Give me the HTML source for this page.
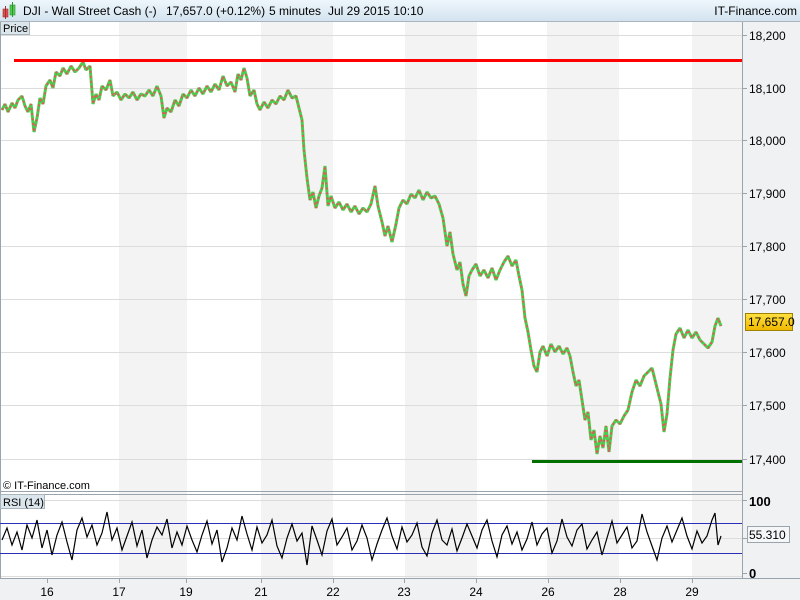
<!DOCTYPE html>
<html><head><meta charset="utf-8"><style>
body{margin:0;width:800px;height:600px;overflow:hidden;background:#fff;font-family:"Liberation Sans",sans-serif;}
svg{display:block}
</style></head><body>
<svg width="800" height="600" xmlns="http://www.w3.org/2000/svg" font-family="Liberation Sans, sans-serif">
<defs><linearGradient id="hg" x1="0" y1="0" x2="0" y2="1"><stop offset="0" stop-color="#eef6fc"/><stop offset="1" stop-color="#d3e3ef"/></linearGradient>
<linearGradient id="yg" x1="0" y1="0" x2="0" y2="1"><stop offset="0" stop-color="#ffe040"/><stop offset="1" stop-color="#f0b800"/></linearGradient></defs>
<rect x="0" y="0" width="800" height="600" fill="#f0f1f3"/>
<rect x="0" y="22" width="742" height="556" fill="#fff"/>
<g fill="#f3f3f3">
<rect x="119" y="22" width="68" height="556"/><rect x="261" y="22" width="72" height="556"/>
<rect x="405" y="22" width="72" height="556"/><rect x="547" y="22" width="72" height="556"/>
<rect x="692" y="22" width="50" height="556"/></g>
<g stroke="#dcdcdc" stroke-width="1">
<line x1="0" y1="35.5" x2="742" y2="35.5"/><line x1="0" y1="88.5" x2="742" y2="88.5"/><line x1="0" y1="140.5" x2="742" y2="140.5"/><line x1="0" y1="193.5" x2="742" y2="193.5"/><line x1="0" y1="246.5" x2="742" y2="246.5"/><line x1="0" y1="299.5" x2="742" y2="299.5"/><line x1="0" y1="352.5" x2="742" y2="352.5"/><line x1="0" y1="405.5" x2="742" y2="405.5"/><line x1="0" y1="459.5" x2="742" y2="459.5"/>
<line x1="0" y1="500.5" x2="742" y2="500.5"/><line x1="0" y1="538.5" x2="742" y2="538.5"/><line x1="0" y1="576.5" x2="742" y2="576.5"/>
</g>
<rect x="0" y="0" width="800" height="21" fill="url(#hg)"/>
<line x1="0" y1="21.5" x2="800" y2="21.5" stroke="#a9b4bd"/>
<rect x="3" y="9" width="5" height="8" fill="#e05050" stroke="#a03030" stroke-width=".6"/><line x1="5.5" y1="6" x2="5.5" y2="19" stroke="#a03030"/>
<rect x="10" y="5" width="5" height="10" fill="#50d050" stroke="#309030" stroke-width=".6"/><line x1="12.5" y1="2" x2="12.5" y2="17" stroke="#309030"/>
<g font-size="12" fill="#000">
<text x="23" y="15">DJI - Wall Street Cash (-)</text>
<text x="166" y="15">17,657.0 (+0.12%)</text>
<text x="269" y="15">5 minutes</text>
<text x="328" y="15">Jul 29 2015 10:10</text>
<text x="797" y="15" text-anchor="end">IT-Finance.com</text></g>
<rect x="0.5" y="21.5" width="29" height="13" fill="#dbe5ec" stroke="#a9b4bd"/>
<text x="3" y="32" font-size="11">Price</text>
<line x1="0.5" y1="22" x2="0.5" y2="578" stroke="#9aa4ad"/>
<line x1="742.5" y1="22" x2="742.5" y2="578" stroke="#9aa4ad"/>
<line x1="0" y1="491.5" x2="742" y2="491.5" stroke="#9aa4ad"/>
<line x1="0" y1="494.5" x2="742" y2="494.5" stroke="#9aa4ad"/>
<line x1="0" y1="578.5" x2="800" y2="578.5" stroke="#9aa4ad"/>
<g fill="none" stroke-width="3" stroke-linejoin="bevel">
<polyline stroke="#4ccc4c" points="2,110 5,104 8,112 12,103 15,108 18,100 22,96 25,106 28,112 31,104 34,132 37,118 40,98 43,104 46,86 50,80 53,88 56,72 60,76 63,68 67,74 71,66 75,72 79,68 83,62 86,70 90,66 93,104 96,94 99,100 102,86 106,90 110,80 113,96 117,92 121,100 125,94 129,98 133,92 137,100 141,94 145,96 149,90 153,96 157,86 161,96 164,118 167,108 171,112 175,100 179,106 183,94 187,98 191,90 195,96 199,88 203,94 207,86 211,92 215,84 219,90 223,76 227,86 231,82 235,92 238,74 241,80 244,68 247,78 250,96 254,90 257,104 260,110 264,102 268,108 272,100 276,104 280,96 284,100 288,90 292,98 296,96 299,108 302,120 304,150 307,178 310,200 313,192 316,208 319,196 322,188 325,166 328,206 331,196 335,208 339,202 343,210 347,204 351,212 355,206 359,214 363,208 367,212 371,204 375,186 378,206 382,222 385,236 388,226 392,242 396,224 399,208 403,200 407,204 411,194 415,198 419,190 423,200 427,192 431,198 435,196 439,204 443,218 447,246 450,232 453,254 457,270 460,262 463,284 466,296 469,276 472,270 476,264 480,276 484,270 488,278 492,268 496,280 500,270 504,262 508,256 512,266 516,260 519,276 522,290 525,318 528,332 531,350 534,366 537,372 540,352 543,346 547,356 551,344 555,352 559,346 563,354 567,348 570,356 573,372 576,386 579,380 582,400 585,420 588,412 591,440 594,430 597,454 600,436 603,448 606,426 609,452 612,426 616,420 620,424 624,416 628,410 632,392 636,380 640,386 644,376 648,372 652,368 655,380 658,392 661,404 664,432 667,414 670,378 673,350 676,334 680,328 684,338 688,330 692,338 696,332 700,340 704,344 708,348 712,342 715,326 718,318 721,326"/>
<polyline stroke="#dd5a5a" stroke-width="2" stroke-dasharray="2 3" points="2,110 5,104 8,112 12,103 15,108 18,100 22,96 25,106 28,112 31,104 34,132 37,118 40,98 43,104 46,86 50,80 53,88 56,72 60,76 63,68 67,74 71,66 75,72 79,68 83,62 86,70 90,66 93,104 96,94 99,100 102,86 106,90 110,80 113,96 117,92 121,100 125,94 129,98 133,92 137,100 141,94 145,96 149,90 153,96 157,86 161,96 164,118 167,108 171,112 175,100 179,106 183,94 187,98 191,90 195,96 199,88 203,94 207,86 211,92 215,84 219,90 223,76 227,86 231,82 235,92 238,74 241,80 244,68 247,78 250,96 254,90 257,104 260,110 264,102 268,108 272,100 276,104 280,96 284,100 288,90 292,98 296,96 299,108 302,120 304,150 307,178 310,200 313,192 316,208 319,196 322,188 325,166 328,206 331,196 335,208 339,202 343,210 347,204 351,212 355,206 359,214 363,208 367,212 371,204 375,186 378,206 382,222 385,236 388,226 392,242 396,224 399,208 403,200 407,204 411,194 415,198 419,190 423,200 427,192 431,198 435,196 439,204 443,218 447,246 450,232 453,254 457,270 460,262 463,284 466,296 469,276 472,270 476,264 480,276 484,270 488,278 492,268 496,280 500,270 504,262 508,256 512,266 516,260 519,276 522,290 525,318 528,332 531,350 534,366 537,372 540,352 543,346 547,356 551,344 555,352 559,346 563,354 567,348 570,356 573,372 576,386 579,380 582,400 585,420 588,412 591,440 594,430 597,454 600,436 603,448 606,426 609,452 612,426 616,420 620,424 624,416 628,410 632,392 636,380 640,386 644,376 648,372 652,368 655,380 658,392 661,404 664,432 667,414 670,378 673,350 676,334 680,328 684,338 688,330 692,338 696,332 700,340 704,344 708,348 712,342 715,326 718,318 721,326"/>
</g>
<rect x="14" y="59" width="728" height="3" fill="#ff0000"/>
<rect x="532" y="460" width="210" height="3" fill="#007000"/>
<text x="3" y="489" font-size="11">© IT-Finance.com</text>
<rect x="0.5" y="494.5" width="44" height="14" fill="#dbe5ec" stroke="#a9b4bd"/>
<text x="3" y="506" font-size="11">RSI (14)</text>
<line x1="0" y1="523.5" x2="742" y2="523.5" stroke="#2b2fb8"/>
<line x1="0" y1="553.5" x2="742" y2="553.5" stroke="#2b2fb8"/>
<polyline fill="none" stroke="#000" stroke-width="1.2" points="2,540 7,528 12,545 17,532 22,550 27,525 32,538 37,520 42,548 47,530 52,555 57,535 62,522 67,542 72,560 77,530 82,518 87,537 92,525 97,545 102,533 107,512 112,540 117,528 122,550 127,536 132,522 137,546 142,530 147,558 152,540 157,527 162,535 167,519 172,548 177,532 182,545 187,526 192,540 197,552 202,535 207,521 212,544 217,530 222,562 227,548 232,528 237,540 242,516 247,534 252,550 257,527 262,543 267,535 272,520 277,546 282,558 287,538 292,524 297,541 302,533 307,565 312,526 317,540 322,555 327,531 332,519 337,545 342,537 347,528 352,550 357,541 362,525 367,538 372,560 377,544 382,530 387,518 392,536 397,549 402,527 407,542 412,535 417,523 422,547 427,556 432,533 437,520 442,540 447,545 452,529 457,551 462,538 467,524 472,536 477,548 482,530 487,520 492,541 497,557 502,535 507,526 512,544 517,532 522,550 527,539 532,522 537,545 542,534 547,528 552,553 557,541 562,519 567,537 572,546 577,530 582,524 587,549 592,540 597,532 602,555 607,538 612,521 617,543 622,535 627,527 632,548 637,541 642,514 647,532 652,546 657,560 662,538 667,526 672,542 677,530 682,518 687,536 692,549 697,531 702,543 707,536 712,520 715,513 718,545 721,536"/>
<g font-size="12" fill="#000">
<text x="749" y="40">18,200</text><text x="749" y="93">18,100</text><text x="749" y="145">18,000</text><text x="749" y="198">17,900</text><text x="749" y="251">17,800</text><text x="749" y="304">17,700</text><text x="749" y="357">17,600</text><text x="749" y="410">17,500</text><text x="749" y="464">17,400</text>
<text x="749" y="506" font-weight="bold" font-size="13">100</text><text x="749" y="578" font-weight="bold" font-size="13">0</text>
</g>
<g stroke="#9aa4ad"><line x1="742" y1="35.5" x2="747" y2="35.5"/><line x1="742" y1="88.5" x2="747" y2="88.5"/><line x1="742" y1="140.5" x2="747" y2="140.5"/><line x1="742" y1="193.5" x2="747" y2="193.5"/><line x1="742" y1="246.5" x2="747" y2="246.5"/><line x1="742" y1="299.5" x2="747" y2="299.5"/><line x1="742" y1="352.5" x2="747" y2="352.5"/><line x1="742" y1="405.5" x2="747" y2="405.5"/><line x1="742" y1="459.5" x2="747" y2="459.5"/><line x1="742" y1="500.5" x2="747" y2="500.5"/><line x1="742" y1="538.5" x2="747" y2="538.5"/><line x1="742" y1="573.5" x2="747" y2="573.5"/>
<line x1="47.5" y1="578" x2="47.5" y2="583"/><line x1="119.5" y1="578" x2="119.5" y2="583"/><line x1="186.5" y1="578" x2="186.5" y2="583"/><line x1="261.5" y1="578" x2="261.5" y2="583"/><line x1="333.5" y1="578" x2="333.5" y2="583"/><line x1="404.5" y1="578" x2="404.5" y2="583"/><line x1="476.5" y1="578" x2="476.5" y2="583"/><line x1="548.5" y1="578" x2="548.5" y2="583"/><line x1="620.5" y1="578" x2="620.5" y2="583"/><line x1="692.5" y1="578" x2="692.5" y2="583"/></g>
<rect x="745.5" y="313.5" width="47" height="17" fill="url(#yg)" stroke="#a08000"/>
<text x="748" y="326" font-size="12">17,657.0</text>
<rect x="747.5" y="526.5" width="42" height="16" fill="#f4f6f8" stroke="#9aa4ad"/>
<text x="749" y="539" font-size="12">55.310</text>
<g font-size="12" text-anchor="middle">
<text x="47" y="596">16</text><text x="119" y="596">17</text><text x="186" y="596">19</text><text x="261" y="596">21</text><text x="333" y="596">22</text><text x="404" y="596">23</text><text x="476" y="596">24</text><text x="548" y="596">26</text><text x="620" y="596">28</text><text x="692" y="596">29</text></g>
</svg>
</body></html>
